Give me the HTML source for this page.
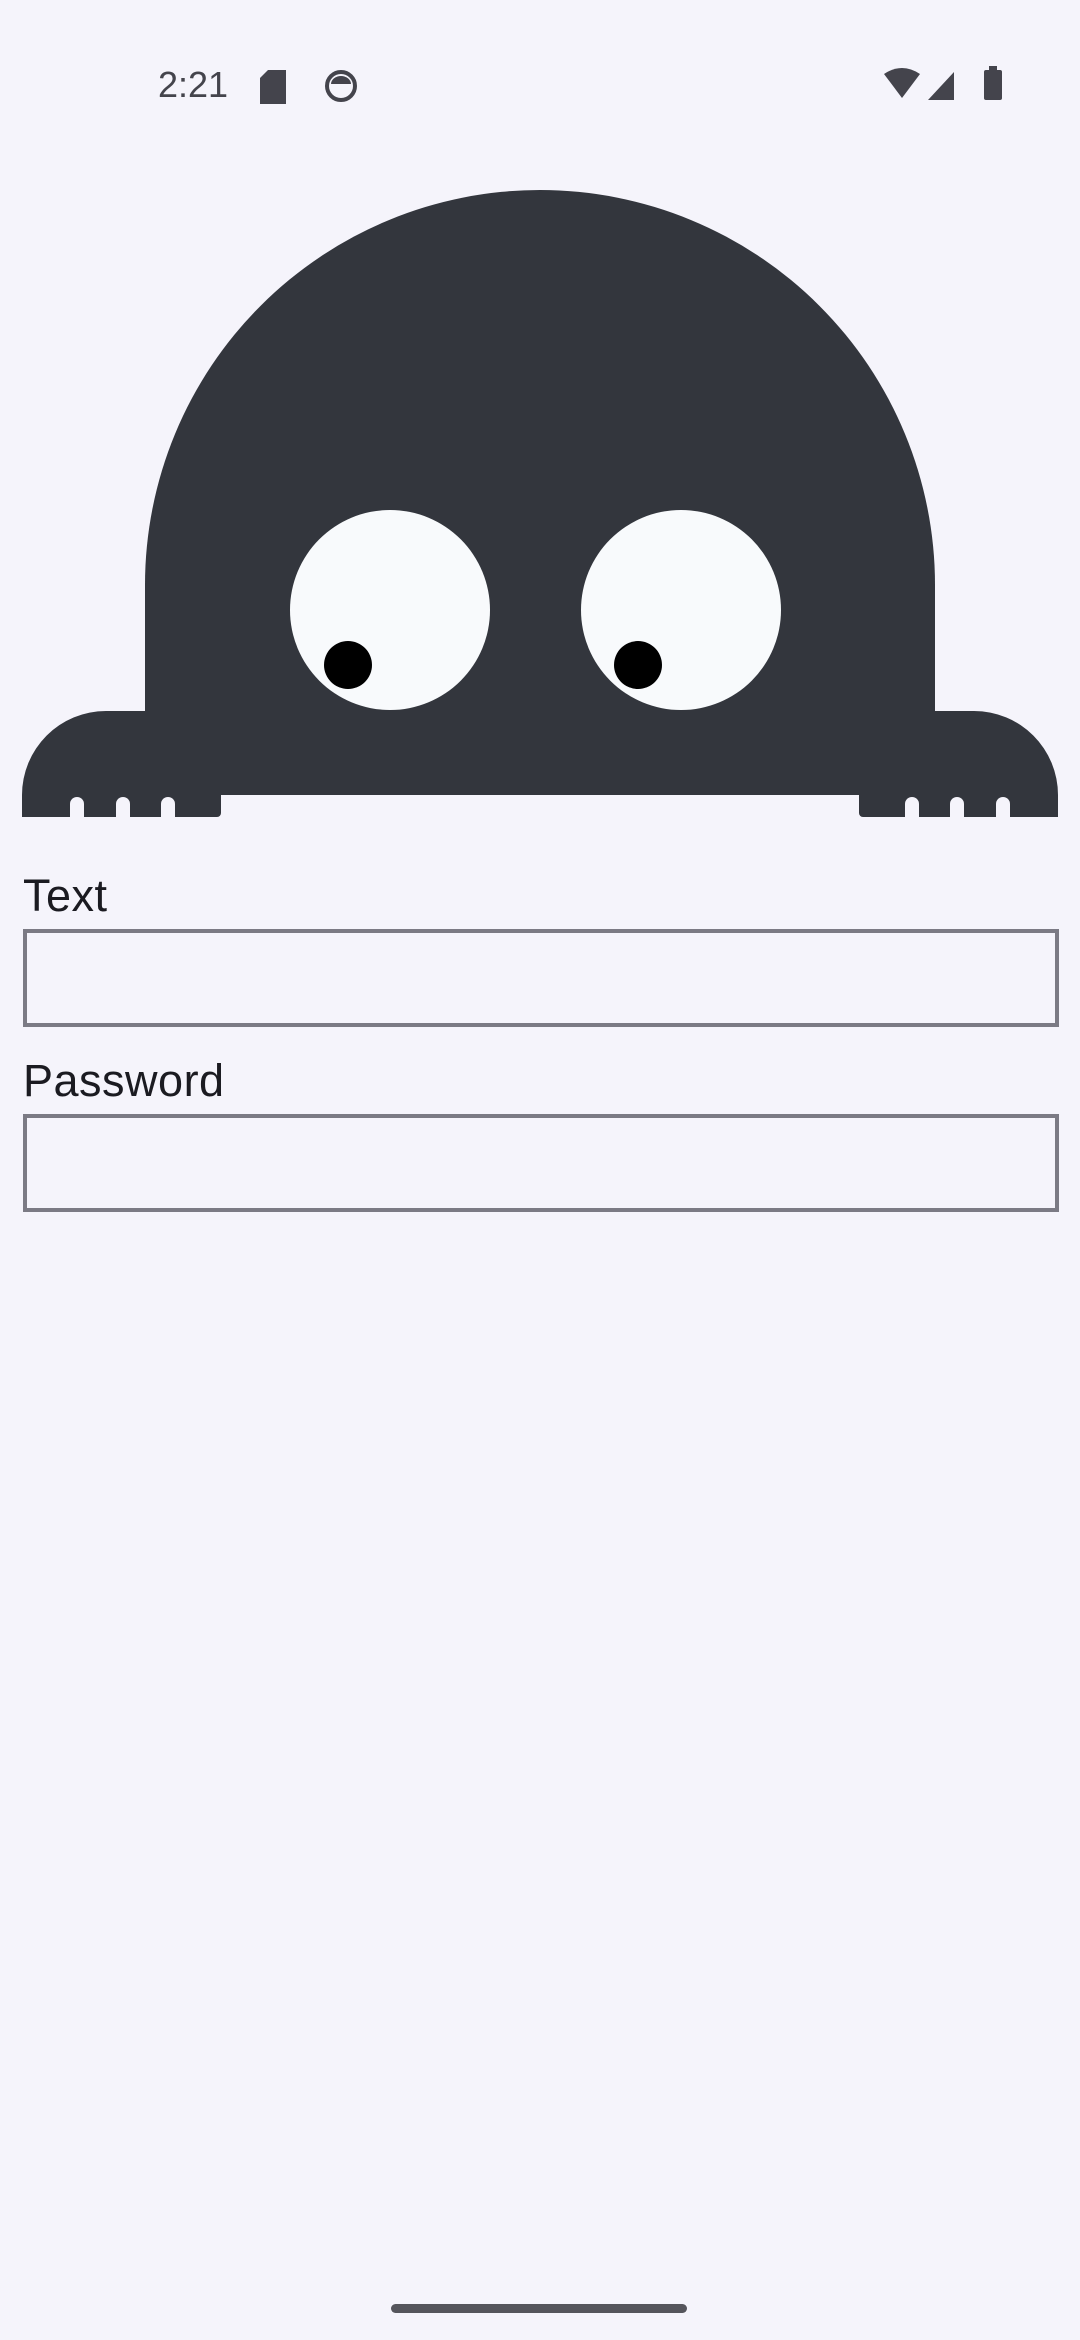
<!DOCTYPE html>
<html><head><meta charset="utf-8"><style>
html,body{margin:0;padding:0;}
body{width:1080px;height:2340px;background:#f5f4fb;position:relative;overflow:hidden;font-family:"Liberation Sans",sans-serif;}
.lbl{position:absolute;left:23px;font-size:45px;color:#1b1b21;letter-spacing:0.5px;}
.box{position:absolute;left:23px;width:1028px;height:90px;border:4px solid #7b7a84;}
</style></head><body>
<div style="position:absolute;left:158px;top:64px;font-size:36px;color:#44444c;">2:21</div>
<svg width="1080" height="140" style="position:absolute;left:0;top:0">
<path d="M268 70h18v34h-26v-26z" fill="#44444c"/>
<circle cx="341" cy="86" r="14" fill="none" stroke="#44444c" stroke-width="4"/>
<path d="M331 84a10 8 0 0 1 20 0z" fill="#44444c"/>
<path d="M884 74q18-12 36 0l-18 24z" fill="#44444c"/>
<path d="M928 100l26-28v28z" fill="#44444c"/>
<rect x="984" y="70" width="18" height="30" rx="2" fill="#44444c"/>
<rect x="989" y="66" width="8" height="5" fill="#44444c"/>
</svg>
<svg width="1080" height="840" style="position:absolute;left:0;top:0">
<path d="M145 795V585A395 395 0 0 1 935 585V795Z" fill="#33363d"/>
<path d="M22 817V795A84 84 0 0 1 106 711H150V795H221V813a4 4 0 0 1-4 4Z" fill="#33363d"/>
<path d="M1058 817V795A84 84 0 0 0 974 711H930V795H859V813a4 4 0 0 0 4 4Z" fill="#33363d"/>
<g fill="#f5f4fb">
<path d="M70 818V804a7 7 0 0 1 14 0V818z"/>
<path d="M116 818V804a7 7 0 0 1 14 0V818z"/>
<path d="M161 818V804a7 7 0 0 1 14 0V818z"/>
<path d="M905 818V804a7 7 0 0 1 14 0V818z"/>
<path d="M950 818V804a7 7 0 0 1 14 0V818z"/>
<path d="M996 818V804a7 7 0 0 1 14 0V818z"/>
</g>
<circle cx="390" cy="610" r="100" fill="#f8fafc"/>
<circle cx="681" cy="610" r="100" fill="#f8fafc"/>
<circle cx="348" cy="665" r="24" fill="#000"/>
<circle cx="638" cy="665" r="24" fill="#000"/>
</svg>
<div class="lbl" style="top:870px">Text</div>
<div class="box" style="top:929px"></div>
<div class="lbl" style="top:1055px">Password</div>
<div class="box" style="top:1114px"></div>
<div style="position:absolute;left:391px;top:2304px;width:296px;height:9px;border-radius:5px;background:#55555c"></div>
</body></html>
